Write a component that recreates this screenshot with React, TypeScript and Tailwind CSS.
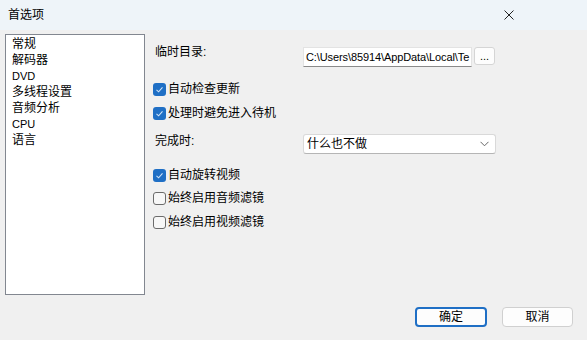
import React from "react";

const font = { fontFamily: '"Liberation Sans", "Noto Sans CJK SC", sans-serif' };

function Check({ checked, label }: { checked: boolean; label: string }) {
  return (
    <div className="flex items-center h-[16px]">
      {checked ? (
        <div className="w-[13px] h-[13px] rounded-[3px] bg-[#1f6fc5] flex items-center justify-center">
          <svg width="9" height="9" viewBox="0 0 9 9">
            <path d="M1.5 4.8 L3.6 6.8 L7.5 2.4" fill="none" stroke="#cfe3f8" strokeWidth="1.1" />
          </svg>
        </div>
      ) : (
        <div className="w-[13px] h-[13px] rounded-[3px] border border-[#6b6b6b] bg-[#f7f7f7]" />
      )}
      <span className="ml-[2px] text-[12px] leading-[16px] text-black">{label}</span>
    </div>
  );
}

export default function App() {
  const items = ["常规", "解码器", "DVD", "多线程设置", "音频分析", "CPU", "语言"];
  return (
    <div className="w-[587px] h-[340px] flex flex-col bg-[#f0f0f0] overflow-hidden" style={font}>
      <div className="h-[30px] bg-[#eef4f9] flex items-center justify-between pl-[8px] pr-[73px]">
        <span className="text-[12px] leading-[16px] text-black">首选项</span>
        <svg width="10" height="10" viewBox="0 0 10 10">
          <path d="M0.5 0.5 L9.5 9.5 M9.5 0.5 L0.5 9.5" stroke="#222" strokeWidth="1" />
        </svg>
      </div>
      <div className="flex-1 flex flex-col pl-[5px] pt-[4px] pr-[14px]">
        <div className="flex">
          <div className="w-[140px] h-[261px] border border-[#828790] bg-white pt-[1px] pl-[6px]">
            {items.map((t) => (
              <div
                key={t}
                className={
                  /^[A-Z]+$/.test(t)
                    ? "h-[16px] leading-[16px] text-[11px] text-black"
                    : "h-[16px] leading-[16px] text-[12px] text-black"
                }
              >
                {t}
              </div>
            ))}
          </div>
          <div className="ml-[8px] flex flex-col">
            <div className="flex items-start mt-[13px]">
              <span className="w-[150px] pl-[2px] -mt-[3px] text-[12px] leading-[16px] text-black">临时目录:</span>
              <div className="w-[169px] h-[20px] bg-white border border-[#e3e3e3] border-b-[#8a8a8a] overflow-hidden whitespace-nowrap text-[11px] tracking-[-0.1px] leading-[18px] pl-[2px] text-black">
                C:\Users\85914\AppData\Local\Te
              </div>
              <div className="ml-[2px] w-[21px] h-[18px] bg-[#fdfdfd] border border-[#d5d5d5] rounded-[3px] flex items-center justify-center text-[11px] leading-[10px] text-black">
                ...
              </div>
            </div>
            <div className="mt-[14px]">
              <Check checked label="自动检查更新" />
            </div>
            <div className="mt-[8px]">
              <Check checked label="处理时避免进入待机" />
            </div>
            <div className="flex items-start mt-[13px]">
              <span className="w-[150px] pl-[2px] -mt-[1px] text-[12px] leading-[16px] text-black">完成时:</span>
              <div className="w-[193px] h-[20px] bg-white border border-[#d9d9d9] border-b-[#b5b5b5] rounded-[3px] flex items-center justify-between pl-[3px] pr-[6px]">
                <span className="text-[12px] leading-[16px] text-black">什么也不做</span>
                <svg width="9" height="6" viewBox="0 0 9 6">
                  <path d="M0.5 0.8 L4.5 4.8 L8.5 0.8" fill="none" stroke="#666" strokeWidth="1" />
                </svg>
              </div>
            </div>
            <div className="mt-[13px]">
              <Check checked label="自动旋转视频" />
            </div>
            <div className="mt-[7px]">
              <Check checked={false} label="始终启用音频滤镜" />
            </div>
            <div className="mt-[8px]">
              <Check checked={false} label="始终启用视频滤镜" />
            </div>
          </div>
        </div>
        <div className="flex justify-end mt-[12px] gap-[15px]">
          <div className="w-[72px] h-[20px] rounded-[4px] border-2 border-[#1f6fc5] bg-[#fdfdfd] flex items-center justify-center text-[12px] leading-[16px] text-black">
            确定
          </div>
          <div className="w-[71px] h-[20px] rounded-[4px] border border-[#d0d0d0] bg-[#fdfdfd] flex items-center justify-center text-[12px] leading-[16px] text-black">
            取消
          </div>
        </div>
      </div>
    </div>
  );
}
